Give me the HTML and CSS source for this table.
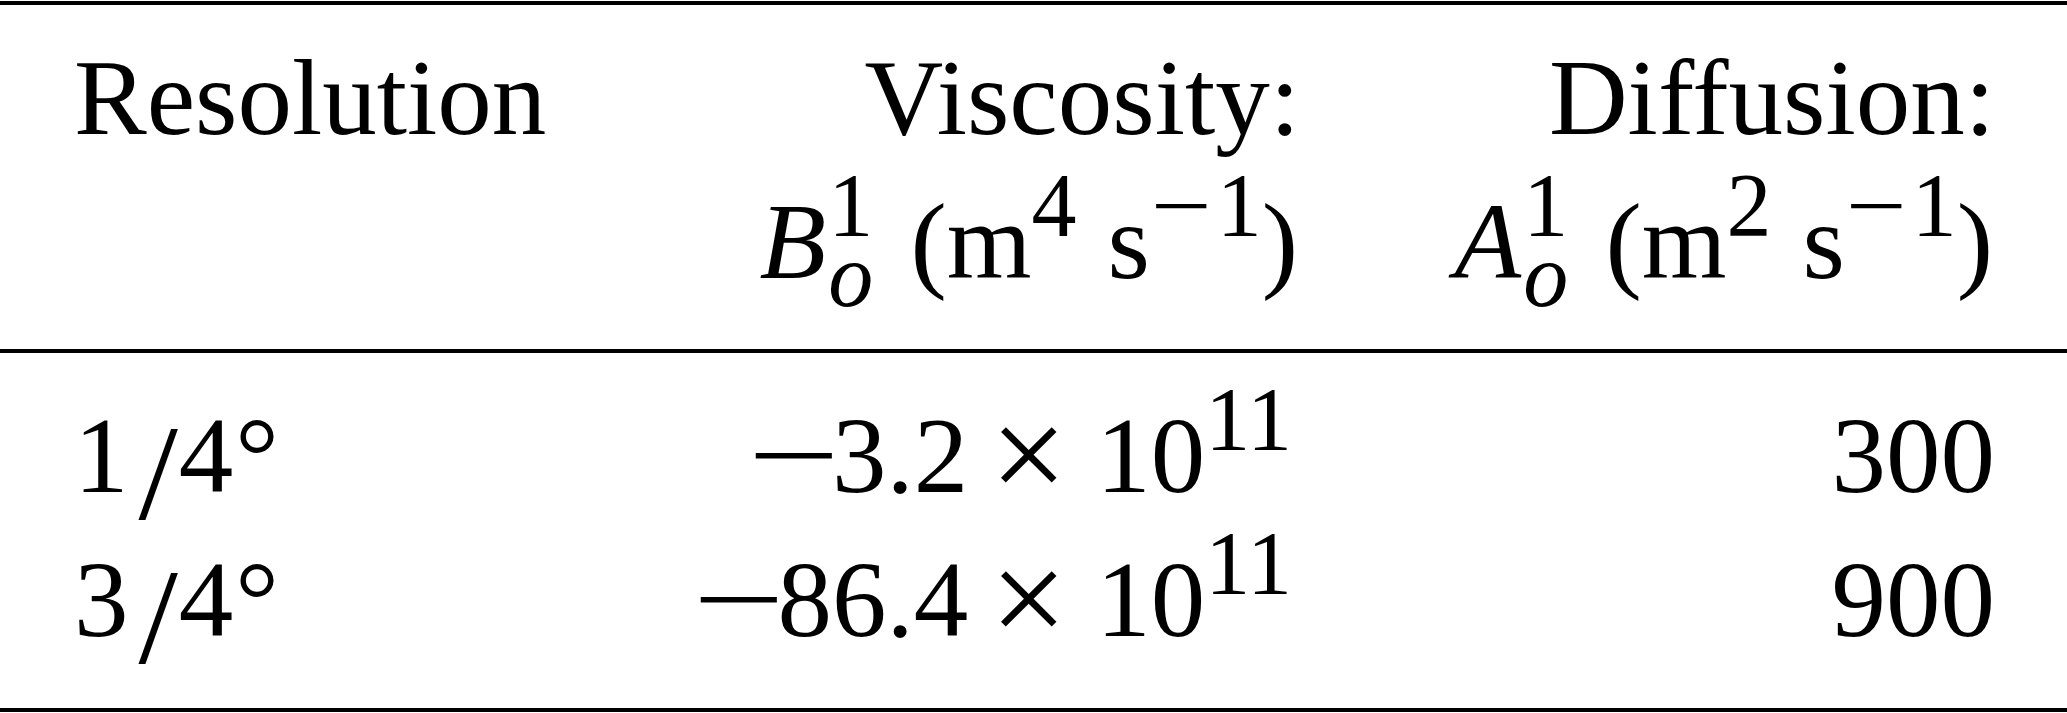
FILE: index.html
```html
<!DOCTYPE html>
<html>

<head>
  <meta charset="utf-8">
  <title>Resolution, viscosity and diffusion</title>
  <meta name="viewport" content="width=device-width, initial-scale=1">
  <link rel="stylesheet" href="styles.css">
</head>
<body>
  <table class="params">
    <colgroup>
      <col class="col-res">
      <col class="col-visc">
      <col class="col-diff">
    </colgroup>
    <thead>
      <tr>
        <th class="left">Resolution</th>
        <th class="right">Viscosity:<br><i>B</i><span class="scripts"><span>1</span><span class="lo">o</span></span> (m<sup>4</sup><span class="unit">s</span><sup><span class="minus">&minus;</span>1</sup><span class="close">)</span></th>
        <th class="right last">Diffusion:<br><i>A</i><span class="scripts"><span>1</span><span class="lo">o</span></span> (m<sup>2</sup><span class="unit">s</span><sup><span class="minus">&minus;</span>1</sup><span class="close">)</span></th>
      </tr>
    </thead>
    <tbody>
      <tr class="first">
        <td class="left">1<span class="slash">/</span>4<span class="deg">&deg;</span></td>
        <td class="right num">
          <span class="neg">&minus;</span>3.2 <span class="times">&times;</span> 10<sup>11</sup>
        </td>
        <td class="right last">300</td>
      </tr>
      <tr class="final">
        <td class="left">3<span class="slash">/</span>4<span class="deg">&deg;</span></td>
        <td class="right num">
          <span class="neg">&minus;</span>86.4 <span class="times">&times;</span> 10<sup>11</sup>
        </td>
        <td class="right last">900</td>
      </tr>
    </tbody>
  </table>
</body>
</html>
```

FILE: styles.css
```css
/* basic style */
body {
  margin: 1px 0 0 0;
  background: white;
  color: black;
  font-family: "Liberation Serif", "Times New Roman", serif;
}

/* table style */
table.params {
  width: 100%;
  table-layout: fixed;
  border-collapse: separate;
  border-spacing: 0;
  font-size: 109px;
  line-height: 144px;
}

col.col-res {
  width: 650px;
}

col.col-visc {
  width: 650px;
}

table.params th,
table.params td {
  padding: 0;
  font-weight: normal;
  vertical-align: top;
  white-space: nowrap;
}

table.params .left {
  text-align: left;
  padding-left: 74px;
}

table.params .right {
  text-align: right;
}

table.params .last {
  padding-right: 72px;
}

table.params td.num {
  padding-right: 8px;
}

/* rules */
table.params thead th {
  border-top: 4px solid black;
  border-bottom: 4px solid black;
  padding-top: 21px;
  padding-bottom: 35px;
}

table.params tr.first td {
  padding-top: 31px;
}

table.params tr.final td {
  border-bottom: 4px solid black;
  padding-bottom: 36px;
}

/* math bits */
table.params sup {
  font-size: 90px;
  line-height: 0;
  vertical-align: 42px;
}

/* stacked super- and subscript */
.scripts {
  display: inline-flex;
  flex-direction: column;
  font-size: 90px;
  line-height: 70px;
  vertical-align: 42px;
  margin: 0 10px -40px 2px;
}

.scripts .lo {
  font-style: italic;
}

table.params i {
  padding-left: 4px;
}

.unit {
  margin-left: 31px;
}

.minus {
  display: inline-block;
  transform: scaleX(1.2);
  margin: 0 10px 0 6px;
}

.close {
  margin-right: 2px;
}

.neg {
  display: inline-block;
  transform: scaleX(1.5);
  margin-right: 8px;
}

.times {
  display: inline-block;
  transform: scale(1.25);
  transform-origin: 50% 54%;
  margin: 0 10px 0 2px;
}

.slash {
  display: inline-block;
  transform: translateY(18px) scale(1.3, 1.25);
  margin: 0 6px 0 14px;
}

.deg {
  margin-left: 2px;
}
```
